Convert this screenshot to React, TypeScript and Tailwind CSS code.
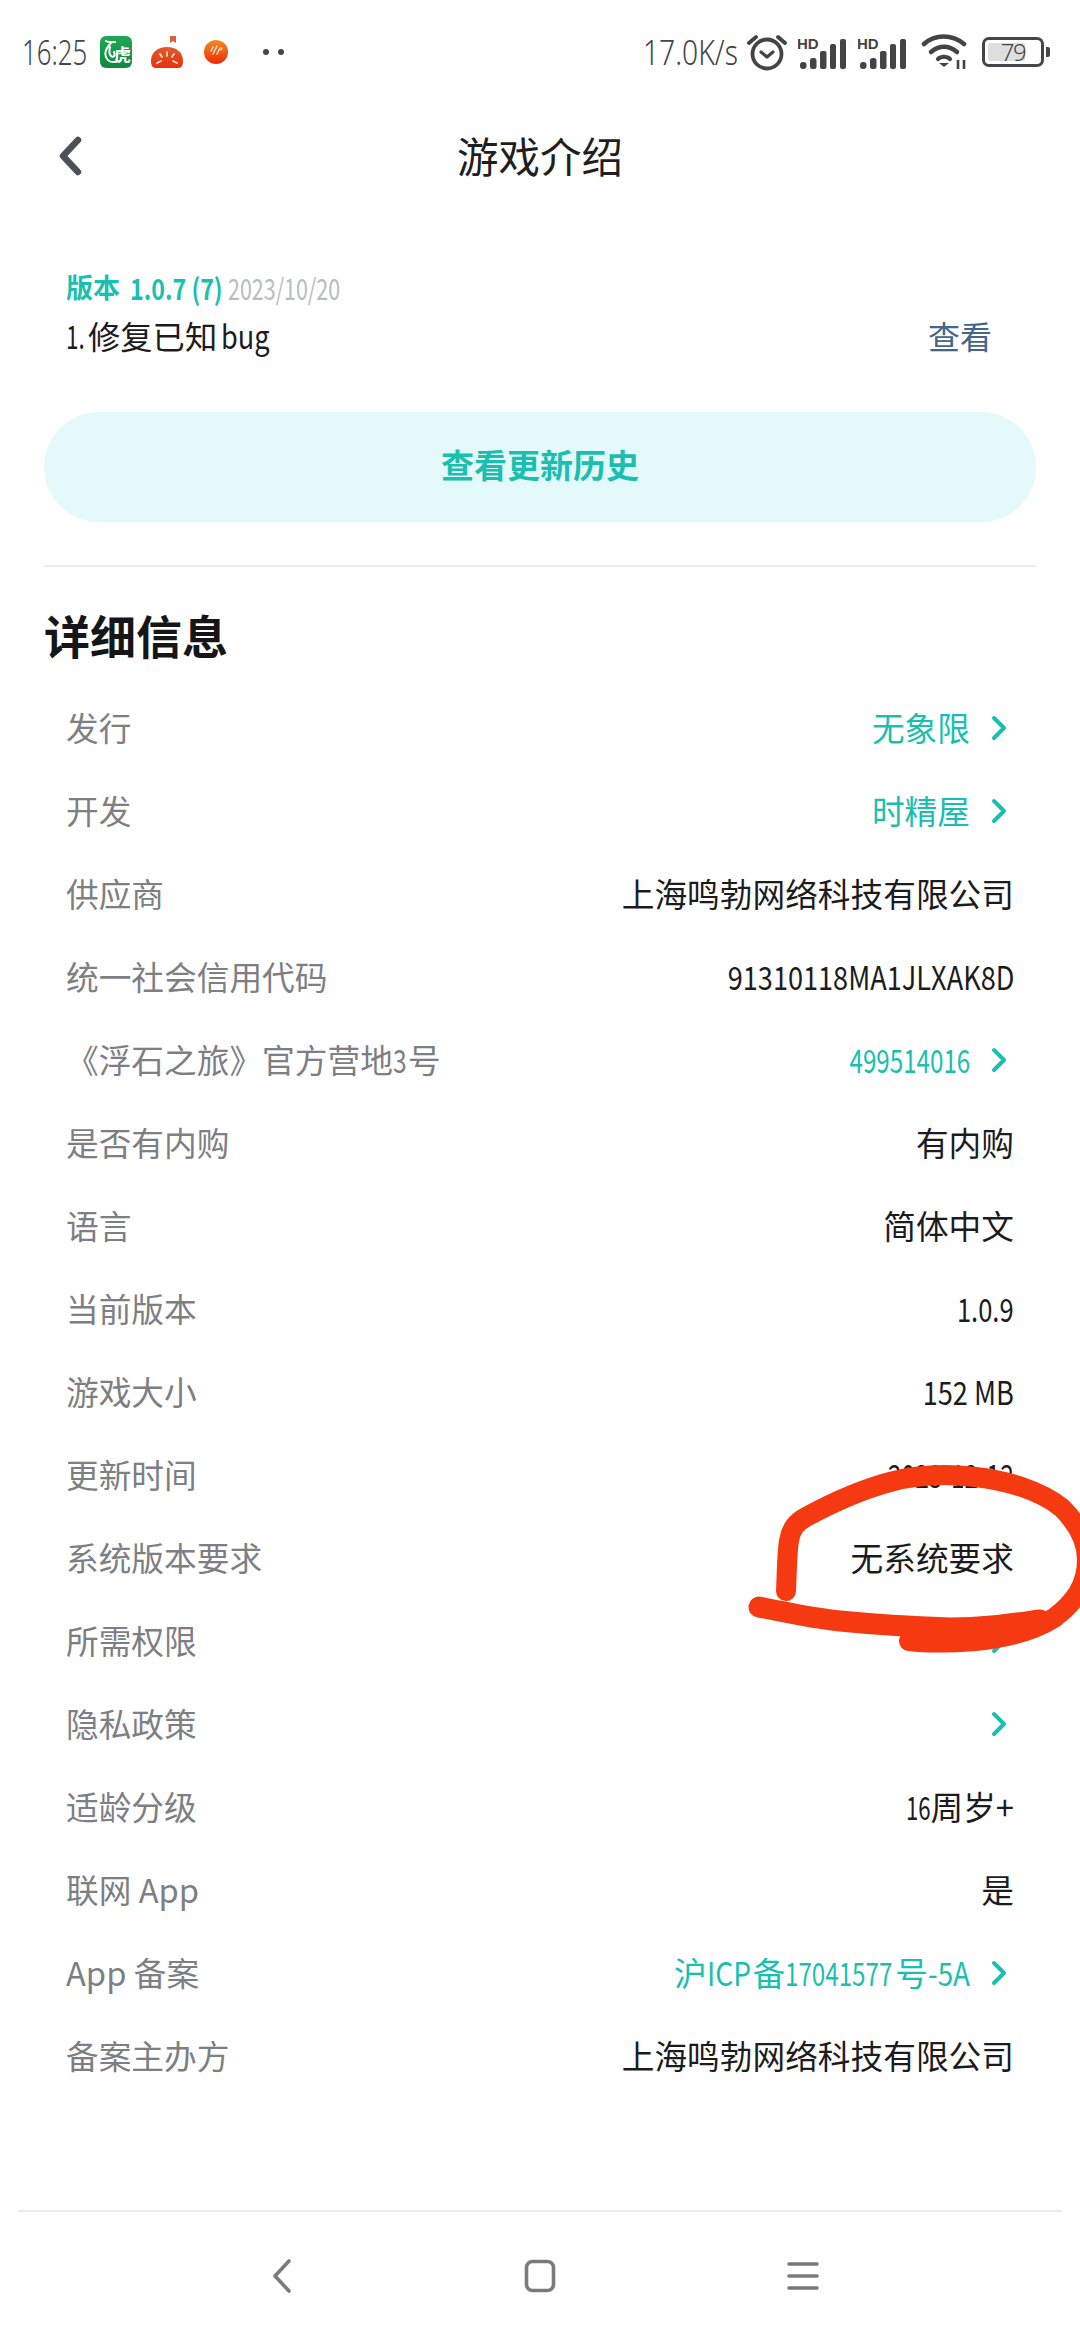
import React from "react";

const FONT = "[font-family:'Noto_Sans_CJK_SC','Noto_Sans',sans-serif]";
const TEAL = "text-[#1abfb0]";

function Chevron() {
  return (
    <svg width="16" height="26" viewBox="0 0 16 26" className="ml-[21px] mr-[7px] mt-[2px] shrink-0">
      <path d="M3 3 L13 13 L3 23" fill="none" stroke="#1abfb0" strokeWidth="4" strokeLinecap="round" strokeLinejoin="round" />
    </svg>
  );
}

/* Narrow latin run inside CJK text: the font's digits are condensed in the picture. */
function Cond({ className, children }: { className: string; children: React.ReactNode }) {
  return <span className={`inline-block whitespace-pre ${className}`}>{children}</span>;
}

type RowData = { key: string; label: React.ReactNode; value?: React.ReactNode; link?: boolean; chevron?: boolean };

const rows: RowData[] = [
  { key: "a", label: "发行", value: "无象限", link: true, chevron: true },
  { key: "b", label: "开发", value: "时精屋", link: true, chevron: true },
  { key: "c", label: "供应商", value: "上海鸣勃网络科技有限公司" },
  { key: "d", label: "统一社会信用代码", value: <Cond className="origin-right scale-x-[0.83]">91310118MA1JLXAK8D</Cond> },
  {
    key: "e",
    label: (
      <>
        《浮石之旅》官方营地<Cond className="w-[15px] origin-left scale-x-[0.75]">3</Cond>号
      </>
    ),
    value: <Cond className="origin-right scale-x-[0.74]">499514016</Cond>,
    link: true,
    chevron: true,
  },
  { key: "f", label: "是否有内购", value: "有内购" },
  { key: "g", label: "语言", value: "简体中文" },
  { key: "h", label: "当前版本", value: <Cond className="origin-right scale-x-[0.78]">1.0.9</Cond> },
  { key: "i", label: "游戏大小", value: <Cond className="origin-right scale-x-[0.83]">152 MB</Cond> },
  { key: "j", label: "更新时间", value: <Cond className="origin-right scale-x-[0.75]">2023-12-12</Cond> },
  { key: "k", label: "系统版本要求", value: "无系统要求" },
  { key: "l", label: "所需权限", chevron: true },
  { key: "m", label: "隐私政策", chevron: true },
  {
    key: "n",
    label: "适龄分级",
    value: (
      <>
        <Cond className="w-[24px] origin-left scale-x-[0.68]">16</Cond>周岁+
      </>
    ),
  },
  { key: "o", label: "联网 App", value: "是" },
  {
    key: "p",
    label: "App 备案",
    value: (
      <>
        沪<Cond className="w-[46px] origin-left scale-x-[0.86]">ICP</Cond>备
        <Cond className="w-[110px] origin-left scale-x-[0.74]">17041577</Cond>号
        <Cond className="w-[42px] origin-left scale-x-[0.85]">-5A</Cond>
      </>
    ),
    link: true,
    chevron: true,
  },
  { key: "q", label: "备案主办方", value: "上海鸣勃网络科技有限公司" },
];

function Row({ r }: { r: RowData }) {
  return (
    <div className="flex h-[83px] items-center justify-between px-[22px]">
      <span className="whitespace-nowrap text-[32.7px] leading-[44px] text-[#7d7f83]">{r.label}</span>
      <span className="flex items-center">
        {r.value && (
          <span className={`whitespace-nowrap text-[32.7px] leading-[44px] ${r.link ? TEAL : "text-[#1c1c1e]"}`}>{r.value}</span>
        )}
        {r.chevron && <Chevron />}
      </span>
    </div>
  );
}

function Signal() {
  return (
    <svg width="50" height="34" viewBox="0 0 50 34" className="shrink-0">
      <text x="-1" y="14" fontSize="15" fontWeight="700" fontFamily="Liberation Sans" fill="#444">HD</text>
      <g fill="#444">
        <rect x="2" y="27" width="6.5" height="7" rx="3" />
        <rect x="12" y="23" width="6.5" height="11" rx="2.5" />
        <rect x="22" y="16" width="6.5" height="18" rx="2" />
        <rect x="32" y="9" width="6" height="25" rx="2" />
        <rect x="42" y="4" width="6" height="30" rx="2" />
      </g>
    </svg>
  );
}

function StatusBar() {
  return (
    <div className="flex h-[100px] shrink-0 items-center justify-between pl-[22px] pr-[30px] pt-[3px] text-[#444649]">
      <div className="flex items-center">
        <span className="w-[66px] origin-left scale-x-[0.76] whitespace-nowrap text-[34px] font-light leading-[38px] [font-family:'Noto_Sans',sans-serif]">
          16:25
        </span>
        <svg width="32" height="32" viewBox="0 0 32 32" className="ml-[12px] shrink-0">
          <defs>
            <linearGradient id="g" x1="0" y1="0" x2="0" y2="1">
              <stop offset="0" stopColor="#1fa857" />
              <stop offset="1" stopColor="#0f8a3f" />
            </linearGradient>
          </defs>
          <rect width="32" height="32" rx="6" fill="url(#g)" />
          <path
            d="M6 5 C9 7 12 6 15 6 M11 7 C7 11 4 16 6 21 C8 26 13 27 18 25 M10 11 C9 15 9 18 11 20 C13 22 16 20 14 16"
            fill="none"
            stroke="#fff"
            strokeWidth="2"
            strokeLinecap="round"
          />
          <text x="14" y="25" fontSize="17" fontWeight="700" fill="#fff" fontFamily="Noto Sans CJK SC">虎</text>
        </svg>
        <svg width="34" height="34" viewBox="0 0 34 34" className="ml-[18px] shrink-0">
          <defs>
            <linearGradient id="t" x1="0" y1="0" x2="0" y2="1">
              <stop offset="0" stopColor="#dd5a2c" />
              <stop offset="1" stopColor="#e8320f" />
            </linearGradient>
          </defs>
          <path d="M20 1 H26 V8 L23 6 L20 8 Z" fill="#d9603f" />
          <path d="M1 26 C1 17 8 12 17 12 C26 12 33 17 33 26 C33 31 31 33 28 33 H6 C3 33 1 31 1 26 Z" fill="url(#t)" />
          <path d="M17 17 v4 M10 19 l2 3 M24 19 l-2 3 M7 28 l4 -2 M27 28 l-4 -2" stroke="#ffe1cf" strokeWidth="1.7" strokeLinecap="round" />
        </svg>
        <svg width="24" height="24" viewBox="0 0 24 24" className="ml-[20px] shrink-0">
          <defs>
            <linearGradient id="o" x1="0" y1="0" x2="0" y2="1">
              <stop offset="0" stopColor="#f58a1f" />
              <stop offset="1" stopColor="#ec2c0b" />
            </linearGradient>
          </defs>
          <circle cx="12" cy="12" r="12" fill="url(#o)" />
          <path d="M9 7 l-2 4 M13 6 l-4 8 M16 8 l-3 6 M18 8 l-1 2" stroke="#ffe3d2" strokeWidth="1.4" strokeLinecap="round" />
        </svg>
        <span className="ml-[35px] h-[6px] w-[6px] rounded-full bg-[#444649]" />
        <span className="ml-[9px] h-[6px] w-[6px] rounded-full bg-[#444649]" />
      </div>
      <div className="flex items-center">
        <span className="w-[97px] origin-left scale-x-[0.83] whitespace-nowrap text-[34px] font-light leading-[38px] [font-family:'Noto_Sans',sans-serif]">
          17.0K/s
        </span>
        <svg width="40" height="38" viewBox="0 0 40 38" className="ml-[7px] shrink-0">
          <circle cx="20" cy="21" r="14.5" fill="none" stroke="#444" strokeWidth="3.8" />
          <path d="M14 19 L20 24 L26 19" fill="none" stroke="#444" strokeWidth="3.2" strokeLinecap="round" strokeLinejoin="round" />
          <path d="M2 10 L9 4 M38 10 L31 4" stroke="#444" strokeWidth="3.8" strokeLinecap="round" />
        </svg>
        <span className="ml-[11px] flex">
          <Signal />
        </span>
        <span className="ml-[10px] flex">
          <Signal />
        </span>
        <svg width="48" height="38" viewBox="0 0 48 38" className="ml-[13px] shrink-0">
          <path d="M3 11 C14 1 31 1 43 11" fill="none" stroke="#444" strokeWidth="4.6" strokeLinecap="round" />
          <path d="M10 19 C18 12 28 12 36 19" fill="none" stroke="#444" strokeWidth="4.6" strokeLinecap="round" />
          <path d="M17 26 C20 23 26 23 29 26" fill="none" stroke="#444" strokeWidth="4.2" strokeLinecap="round" />
          <path d="M23 34 l-5 -4 h10 Z" fill="#444" />
          <path d="M37 27 v9 M43 27 v9" stroke="#444" strokeWidth="2.6" />
        </svg>
        <span className="relative ml-[13px] flex h-[30px] w-[62px] items-center rounded-[7px] border-[3px] border-[#444649] p-[3px]">
          <span className="h-full w-[74%] rounded-[2px] bg-[#dedede]" />
          <span className="absolute inset-0 text-center text-[24px] font-light leading-[24px] tracking-[-1.5px] text-[#444649] [font-family:'Noto_Sans',sans-serif]">
            79
          </span>
        </span>
        <span className="ml-[2px] h-[10px] w-[4px] rounded-r-[2px] bg-[#444649]" />
      </div>
    </div>
  );
}

function Scribble() {
  return (
    <svg width="1080" height="2340" viewBox="0 0 1080 2340" className="pointer-events-none absolute left-0 top-0">
      <g fill="none" stroke="#f53a12" strokeLinecap="round" strokeLinejoin="round">
        <path
          d="M786 1591 C787 1570 787 1552 789 1541 C791 1528 797 1522 806 1517 C830 1504 860 1490 890 1482 C920 1474 950 1474 975 1477 C1005 1480 1040 1490 1062 1508 C1078 1524 1087 1540 1087 1560 C1087 1585 1075 1602 1054 1618 C1035 1630 1005 1638 975 1641 C950 1643 925 1643 909 1641"
          strokeWidth="20"
        />
        <path d="M759 1607 C790 1613 810 1618 840 1621 C880 1625 920 1627 950 1628 C985 1628 1010 1624 1040 1620" strokeWidth="21" />
      </g>
    </svg>
  );
}

export default function App() {
  return (
    <div className={`relative flex h-[2340px] w-[1080px] flex-col overflow-hidden bg-white ${FONT}`}>
      <StatusBar />

      <header className="relative flex h-[110px] shrink-0 items-center justify-center">
        <svg width="28" height="44" viewBox="0 0 28 44" className="absolute left-[56px] top-[34px]">
          <path d="M22 6 L7 22 L22 38" fill="none" stroke="#4d5157" strokeWidth="6.5" strokeLinecap="round" strokeLinejoin="round" />
        </svg>
        <h1 className="text-[41.5px] font-normal leading-[56px] text-[#1f1f21]">游戏介绍</h1>
      </header>

      <main className="flex flex-1 flex-col px-[44px]">
        <section className="mt-[57px] flex flex-col px-[22px]">
          <div className="flex h-[40px] items-center whitespace-pre leading-[40px]">
            <span className={`text-[27px] font-bold ${TEAL}`}>版本</span>
            <Cond className={`ml-[10px] w-[88px] origin-left scale-x-[0.8] text-[29px] font-semibold ${TEAL}`}>1.0.7 (7)</Cond>
            <Cond className="ml-[10px] w-[111px] origin-left scale-x-[0.74] text-[29px] text-[#b9bcc0]">2023/10/20</Cond>
          </div>
          <div className="mt-[6px] flex h-[44px] items-center justify-between">
            <span className="whitespace-nowrap text-[32.3px] leading-[44px] text-[#1c1c1e]">
              <Cond className="w-[22px] origin-left scale-x-[0.7]">1.</Cond>
              修复已知
              <Cond className="ml-[4px] w-[52px] origin-left scale-x-[0.84]">bug</Cond>
            </span>
            <span className="mr-[22px] text-[32px] leading-[44px] text-[#44668a]">查看</span>
          </div>
        </section>

        <button className={`mt-[55px] flex h-[110px] w-full items-center justify-center rounded-[55px] bg-[#e4f9f9] pb-[5px] text-[33px] font-bold ${TEAL}`}>
          查看更新历史
        </button>

        <div className="mt-[43px] h-[2px] w-full bg-[#ededed]" />

        <h2 className="mt-[35px] text-[46px] font-bold leading-[64px] text-[#161618]">详细信息</h2>

        <div className="mt-[19px] flex flex-col">
          {rows.map((r) => (
            <Row key={r.key} r={r} />
          ))}
        </div>
      </main>

      <nav className="mx-[18px] flex h-[130px] shrink-0 items-center justify-between border-t-2 border-[#ececec] pl-[253px] pr-[243px]">
        <svg width="22" height="36" viewBox="0 0 22 36">
          <path d="M18 3 L4 18 L18 33" fill="none" stroke="#7b7b7b" strokeWidth="3.6" strokeLinecap="round" strokeLinejoin="round" />
        </svg>
        <svg width="32" height="34" viewBox="0 0 32 34">
          <rect x="2.5" y="2.5" width="27" height="29" rx="6" fill="none" stroke="#7b7b7b" strokeWidth="3.6" />
        </svg>
        <svg width="32" height="34" viewBox="0 0 32 34">
          <path d="M2 5 H30 M2 17 H30 M2 29 H30" stroke="#7b7b7b" strokeWidth="3.6" strokeLinecap="round" />
        </svg>
      </nav>

      <Scribble />
    </div>
  );
}
